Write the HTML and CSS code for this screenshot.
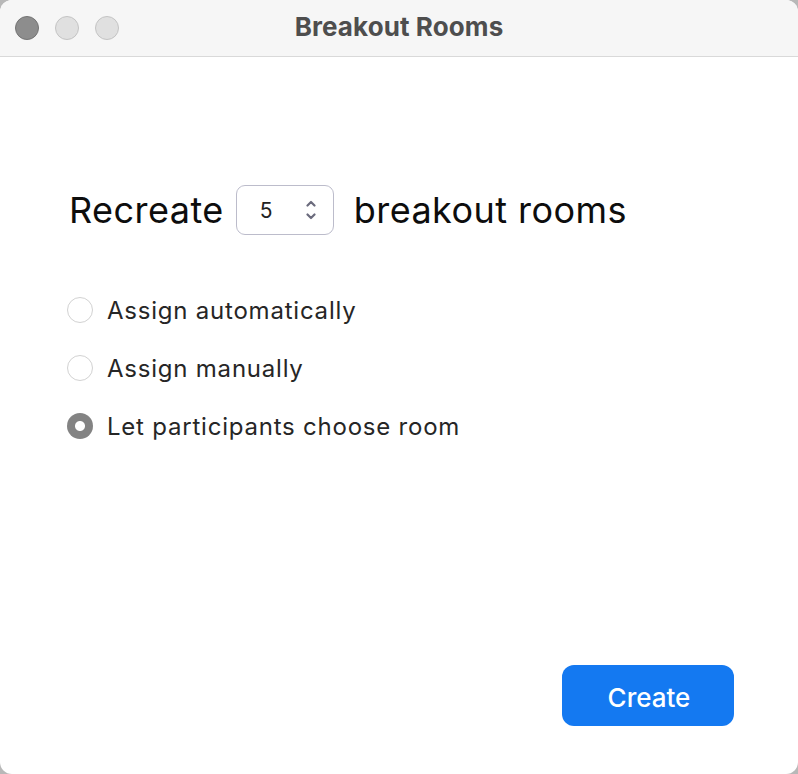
FILE: index.html
```html
<!DOCTYPE html>
<html>
<head>
<meta charset="utf-8">
<link rel="stylesheet" href="styles.css">
</head>
<body>
<div class="window">
  <div class="titlebar">
    <div class="lights">
      <span class="light light-close"></span>
      <span class="light"></span>
      <span class="light"></span>
    </div>
    <div class="title">Breakout Rooms</div>
  </div>
  <div class="content">
    <div class="heading">
      <span class="word">Recreate</span>
      <div class="spinner">
        <span class="spin-value">5</span>
        <svg class="spin-arrows" width="10" height="22" viewBox="0 0 10 22">
          <path d="M1.5 6.5 L5 3 L8.5 6.5" fill="none" stroke="#6b6b7d" stroke-width="2.2" stroke-linecap="round" stroke-linejoin="round"/>
          <path d="M1.5 15.5 L5 19 L8.5 15.5" fill="none" stroke="#6b6b7d" stroke-width="2.2" stroke-linecap="round" stroke-linejoin="round"/>
        </svg>
      </div>
      <span class="word">breakout rooms</span>
    </div>
    <div class="options">
      <label class="option"><span class="radio"></span><span>Assign automatically</span></label>
      <label class="option"><span class="radio"></span><span>Assign manually</span></label>
      <label class="option"><span class="radio radio-on"></span><span>Let participants choose room</span></label>
    </div>
    <div class="actions">
      <button class="create">Create</button>
    </div>
  </div>
</div>
</body>
</html>
```
FILE: styles.css
```css
html, body {
  margin: 0;
  padding: 0;
  background: #b8b8b8;
}
body {
  font-family: Inter, "Noto Sans", "Liberation Sans", sans-serif;
}
.window {
  width: 798px;
  height: 774px;
  background: #ffffff;
  border-radius: 12px;
  overflow: hidden;
  display: flex;
  flex-direction: column;
  box-sizing: border-box;
}
.titlebar {
  height: 56px;
  flex: none;
  background: #f6f6f6;
  border-bottom: 1px solid #d9d9d9;
  display: flex;
  align-items: center;
  position: relative;
}
.lights {
  display: flex;
  gap: 16px;
  padding-left: 15px;
}
.light {
  width: 22px;
  height: 22px;
  border-radius: 50%;
  background: #e0e0e0;
  border: 1px solid #c4c4c4;
}
.light-close {
  background: #8d8d8d;
  border-color: #747474;
}
.title {
  position: absolute;
  left: 0;
  right: 0;
  top: 12px;
  text-align: center;
  font-size: 26px;
  line-height: 30px;
  font-weight: 700;
  letter-spacing: 0.1px;
  color: #4e4e4e;
  pointer-events: none;
}
.content {
  flex: 1;
  display: flex;
  flex-direction: column;
  padding: 128px 64px 48px 69px;
}
.heading {
  display: flex;
  align-items: center;
  font-size: 36px;
  color: #0d0d0d;
  height: 50px;
}
.word {
  letter-spacing: 0.45px;
}
.spinner {
  margin: 0 20px 0 12px;
  border: 1px solid #bcbccb;
  border-radius: 9px;
  display: flex;
  align-items: center;
  justify-content: space-between;
  padding: 0 17px 0 23px;
  box-sizing: border-box;
  width: 98px;
  height: 50px;
}
.spin-value {
  font-size: 21px;
  color: #222;
}
.options {
  margin-top: 46px;
  display: flex;
  flex-direction: column;
}
.option {
  height: 58px;
  display: flex;
  align-items: center;
  gap: 14px;
  font-size: 24px;
  letter-spacing: 0.78px;
  color: #262626;
}
.radio {
  width: 26px;
  height: 26px;
  border-radius: 50%;
  border: 1px solid #d2d2d2;
  background: #fff;
  box-sizing: border-box;
  margin-left: -2px;
}
.radio-on {
  background: radial-gradient(circle, #ffffff 0 4.5px, #838383 5.5px);
  border: none;
}
.actions {
  margin-top: auto;
  display: flex;
  justify-content: flex-end;
}
.create {
  width: 172px;
  height: 61px;
  border: none;
  border-radius: 12px;
  background: #1479f1;
  color: #fff;
  font-family: inherit;
  font-size: 26px;
  font-weight: 500;
  padding: 0 0 0 2px;
  line-height: 65px;
}
```
